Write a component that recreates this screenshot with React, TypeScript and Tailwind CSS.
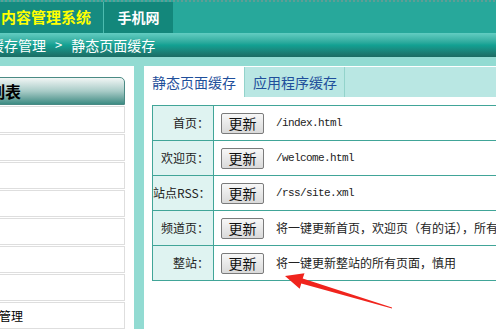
const cjk = "font-['Noto_Sans_CJK_SC',sans-serif]";

const rows = [
  { label: "首页：", text: "/index.html", mono: true },
  { label: "欢迎页：", text: "/welcome.html", mono: true },
  { label: "站点RSS：", text: "/rss/site.xml", mono: true },
  { label: "频道页：", text: "将一键更新首页，欢迎页（有的话），所有频道页", mono: false },
  { label: "整站：", text: "将一键更新整站的所有页面，慎用", mono: false },
];

function UpdateButton() {
  return (
    <button className="h-[21px] w-[43px] shrink-0 rounded-[2px] border border-[#7b7b7b] bg-gradient-to-b from-[#f7f7f7] to-[#dadada] text-[14px] leading-none text-[#111]">
      更新
    </button>
  );
}

export default function App() {
  return (
    <div className={`relative h-[329px] w-[496px] overflow-hidden bg-[#92dbd2] ${cjk}`}>
      <div className="-ml-[30px] w-[560px]">
        {/* top nav */}
        <div className="flex h-[33px] border-t-2 border-dotted border-[#5f9d95] bg-[#27a89b]">
          <div className="flex w-[133px] items-center bg-[#168b80] pl-[31px] text-[15px] font-bold text-[#ffff00]">
            内容管理系统
          </div>
          <div className="w-px bg-[#4dbcaf]" />
          <div className="flex w-[69px] items-center justify-center bg-[#13877b] text-[14px] font-bold text-white">
            手机网
          </div>
        </div>

        {/* breadcrumb */}
        <div className="flex h-[24px] items-center bg-gradient-to-b from-[#62cdc2] via-[#12a193] to-[#1c6b63] pl-[20px] text-[14px] text-white">
          <span>缓存管理</span>
          <span className="mx-[9px] text-[13px]">&gt;</span>
          <span>静态页面缓存</span>
        </div>

        <div className="flex pt-[9px]">
          {/* left panel */}
          <div className="h-[270px] w-[164px] shrink-0 bg-white pr-[9px] pt-[11px]">
            <div className="flex h-[28px] items-center rounded-tr-[5px] border border-[#4a8a84] bg-gradient-to-b from-[#f2f6f5] via-[#a9ccc8] to-[#3c8c84] pl-[18px] text-[16px] font-bold text-black">
              列表
            </div>
            <div className="mt-px flex flex-col gap-px">
              {Array.from({ length: 8 }).map((_, i) => (
                <div key={i} className="flex h-[27px] items-center border border-[#dedede] pl-[4px] text-[12px] text-black">
                  {i === 7 ? "缓存管理" : ""}
                </div>
              ))}
            </div>
          </div>

          {/* right panel */}
          <div className="ml-[10px] flex-1 bg-white">
            <div className="mt-px flex h-[30px] bg-[#b9e7e3]">
              <div className="flex w-[100px] items-center bg-white pl-[8px] text-[14px] text-[#1f4f9b]">静态页面缓存</div>
              <div className="flex w-[101px] items-center border-x border-[#93d3cb] pl-[8px] text-[14px] text-[#1f4f9b]">应用程序缓存</div>
            </div>
            <div className="px-[8px] pb-[9px] pt-[8px]">
              <table className="w-[400px] table-fixed border-collapse">
                <tbody>
                  {rows.map((r) => (
                    <tr key={r.label} className="h-[35px]">
                      <td className="w-[61px] whitespace-nowrap border border-[#41a598] bg-[#dff3f1] pr-[4px] text-right text-[12px] text-[#222]">{r.label}</td>
                      <td className="border border-[#41a598] pl-[7px]">
                        <div className="flex items-center">
                          <UpdateButton />
                          <span
                            className={
                              r.mono
                                ? "ml-[12px] whitespace-nowrap font-['Liberation_Mono',monospace] text-[11px] tracking-[-0.6px] text-[#222]"
                                : "ml-[12px] whitespace-nowrap text-[12px] text-[#222]"
                            }
                          >
                            {r.text}
                          </span>
                        </div>
                      </td>
                    </tr>
                  ))}
                </tbody>
              </table>
            </div>
          </div>
        </div>
      </div>

      {/* annotation arrow */}
      <svg className="pointer-events-none absolute left-0 top-0" width="496" height="329">
        <polygon
          points="285,276 304.5,273.3 302.7,278.6 392,307.6 392,308.4 301.3,283.4 299.7,288.7"
          fill="#f0241d"
        />
      </svg>
    </div>
  );
}
